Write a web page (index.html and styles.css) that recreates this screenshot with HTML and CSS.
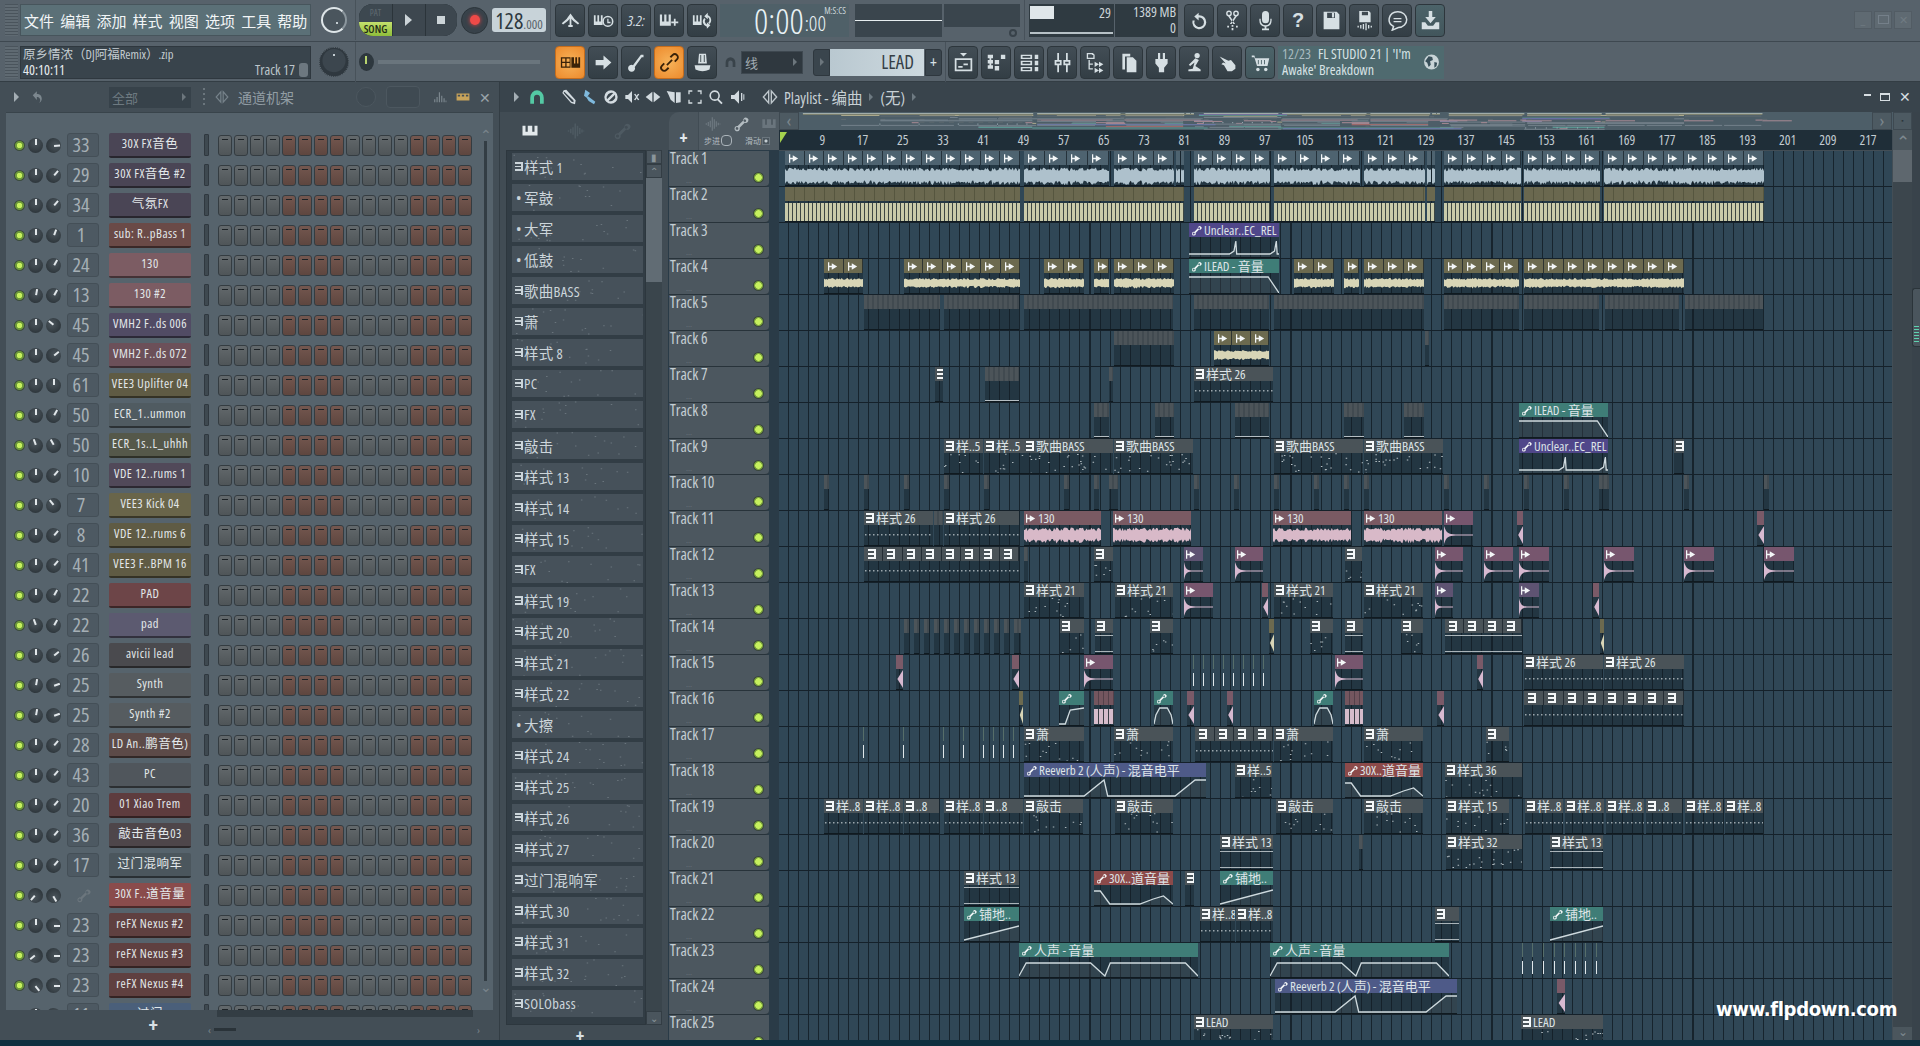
FILE: index.html
```html
<!DOCTYPE html>
<html lang="zh">
<head>
<meta charset="utf-8">
<title>FL Studio 21</title>
<link rel="stylesheet" href="styles.css">
</head>
<body>
<svg class="defs" width="0" height="0" aria-hidden="true">
  <symbol id="i-tap" viewBox="0 0 24 24"><path d="M2 15Q8 11 12 4Q16 11 22 15L20.500 16.500Q15 13 12 9Q9 13 3.500 16.500Z"/><path d="M11 8h2v10h-2zM9.500 17h5v2.500h-5z"/></symbol>
  <symbol id="i-kclock" viewBox="0 0 24 24"><path d="M1 6h2v7h2V6h2v7h2V6h2v11H1z"/><circle cx="17" cy="13" r="5.500" fill="none" stroke="currentColor" stroke-width="1.800"/><path d="M16.300 10h1.400v3.500H20V15h-3.700z"/></symbol>
  <symbol id="i-kplus" viewBox="0 0 24 24"><path d="M1 5h2.500v8H6V5h2.500v8H11V5h2.500v13H1z"/><path d="M17 10h2v3h3v2h-3v3h-2v-3h-3v-2h3z"/></symbol>
  <symbol id="i-keys3" viewBox="0 0 24 24"><path d="M2 5h4v8h3V5h6v8h3V5h4v13H2z"/></symbol>
  <symbol id="i-kloop" viewBox="0 0 24 24"><path d="M1 6h2v7h2V6h2v7h2V6h2v11H1z"/><path d="M18 6a6 6 0 0 1 2 10l-1.500-1.500a4 4 0 0 0-.5-6.500v2.500L14 7l4-4zM17 19a6 6 0 0 1-3-10l1.500 1.500a4 4 0 0 0 1.500 6v-2.500l4 3.500-4 4z"/></symbol>
  <symbol id="i-undo" viewBox="0 0 24 24"><path d="M11 3v3a8 8 0 1 1-7 6h2.500A5.500 5.500 0 1 0 11 8.500V12L6 7.500z"/></symbol>
  <symbol id="i-cut" viewBox="0 0 24 24"><circle cx="8" cy="4" r="2.500" fill="none" stroke="currentColor" stroke-width="1.600"/><circle cx="16" cy="4" r="2.500" fill="none" stroke="currentColor" stroke-width="1.600"/><path d="M8.500 6L15 16h-2L7 7zM15.500 6L9 16h2l6-9z"/><path d="M11 17h2v2h-2zM6 18h2v2H6zM16 18h2v2h-2zM11 20.500h2V23h-2z"/></symbol>
  <symbol id="i-mic" viewBox="0 0 24 24"><rect x="8" y="1" width="8" height="14" rx="4"/><path d="M5 10h1.500v2a5.500 5.500 0 0 0 11 0v-2H19v2a7 7 0 0 1-6 7v2h3v2H8v-2h3v-2a7 7 0 0 1-6-7z"/></symbol>
  <symbol id="i-save" viewBox="0 0 24 24"><path d="M3 2h15l3 3v17H3zM7 3v6h9V3zM12.500 3.500h2.500v5h-2.500z" fill-rule="evenodd"/></symbol>
  <symbol id="i-savew" viewBox="0 0 24 24"><path d="M6 1h11l2 2v11H6zM9 2v4h7V2z" fill-rule="evenodd"/><path d="M4 18h1.500v2H4zM7 17h1.500v4H7zM10 16h1.500v6H10zM13 15h1.500v8H13zM16 17h1.500v4H16zM19 18h1.500v2H19z"/></symbol>
  <symbol id="i-chat" viewBox="0 0 24 24"><path d="M12 2a10 9 0 0 1 1 18l-7 3 1.500-4.200A10 9 0 0 1 12 2z" fill="none" stroke="currentColor" stroke-width="1.700"/><path d="M7.500 9h9v1.500h-9zM7.500 12.500h9V14h-9z"/></symbol>
  <symbol id="i-down" viewBox="0 0 24 24"><path d="M10 1h4v7h4l-6 7-6-7h4z"/><path d="M2 14h4l3 4h6l3-4h4v8H2z"/></symbol>
  <symbol id="i-roll" viewBox="0 0 24 24"><path d="M1 6h11v12H1zM2.500 7.500V11H6V7.500zM7.500 7.500V11H11V7.500zM2.500 12.500V16.500H6V12.500zM7.500 12.500V16.500H11V12.500z" fill-rule="evenodd"/><path d="M13 6h3v7h1.500V6h2v7H21V6h2v12H13z"/></symbol>
  <symbol id="i-arrow" viewBox="0 0 24 24"><path d="M3 9h9V4l9 8-9 8v-5H3z"/></symbol>
  <symbol id="i-note" viewBox="0 0 24 24"><path d="M17 3h3v3h-2L10 17a4 4 0 1 1-2-2z"/></symbol>
  <symbol id="i-link" viewBox="0 0 24 24"><path d="M9 15l6-6" fill="none" stroke="currentColor" stroke-width="2"/><path d="M13 6l2.500-2.500a3.500 3.500 0 0 1 5 5L18 11M11 18l-2.500 2.500a3.500 3.500 0 0 1-5-5L6 13" fill="none" stroke="currentColor" stroke-width="2.200"/></symbol>
  <symbol id="i-fader" viewBox="0 0 24 24"><path d="M8 2h8l1 11H7z"/><path d="M9.500 3.500h1v8h-1zM13.500 3.500h1v8h-1z" fill="#39444b"/><path d="M3 15h18l-1 5q-8 4-16 0z"/></symbol>
  <symbol id="i-pl" viewBox="0 0 24 24"><path d="M8 1h8l-4 4z"/><path d="M2 7h20v15H2zM4 9v11h16V9z" fill-rule="evenodd"/><path d="M6 16h5v2H6zM12 13h5v2h-5z"/></symbol>
  <symbol id="i-seq" viewBox="0 0 24 24"><path d="M2 3h6v4H6v2h2v4H6v2h2v4H2v-4h2v-2H2V9h2V7H2zM10 9h5v5h-5zM17 3h5v5h-5zM10 16h5v5h-5z"/></symbol>
  <symbol id="i-rack" viewBox="0 0 24 24"><path d="M2 3h13v5H2zM4 4.500v2h9v-2zM2 10h13v5H2zM4 11.500v2h9v-2zM2 17h13v5H2zM4 18.500v2h9v-2zM18 3h4v5h-4zM18 10h4v5h-4zM18 17h4v5h-4z" fill-rule="evenodd"/></symbol>
  <symbol id="i-mix" viewBox="0 0 24 24"><path d="M6 1h2v8h3v6H8v8H6v-8H3V9h3zM5 11v2h4v-2zM16 1h2v8h3v6h-3v8h-2v-8h-3V9h3zM15 11v2h4v-2z" fill-rule="evenodd"/></symbol>
  <symbol id="i-brow" viewBox="0 0 24 24"><path d="M2 1h7l2 2v5H2zM3.500 2.500v4H9.500v-3H8.500l-1-1zM4 9h1.500v4H9v1.500H5.500v4H9V20H4z" fill-rule="evenodd"/><path d="M11 11l5 3-5 3zM16 11l5 3-5 3zM11 18l5 3-5 3zM16 18l5 3-5 3z"/></symbol>
  <symbol id="i-docs" viewBox="0 0 24 24"><path d="M5 2h9v3H8v15H5z"/><path d="M10 6h7l4 4v13H10z"/></symbol>
  <symbol id="i-plug" viewBox="0 0 24 24"><path d="M8 1h2.500v7h3V1H16v7h3v5l-4 5v5H9v-5l-4-5V8h3z"/></symbol>
  <symbol id="i-ped" viewBox="0 0 24 24"><circle cx="15" cy="4" r="3"/><path d="M13 7l4 2-4 7 6 4v2H5v-2l5-1 2-7-5 4-1.500-1.500z"/></symbol>
  <symbol id="i-hand" viewBox="0 0 24 24"><path d="M3 5l10 5 3-1 5 6v4l-4 3h-5l-4-7-3-1 2-2 3 1z"/></symbol>
  <symbol id="i-cart" viewBox="0 0 24 24"><path d="M2 4h3l1 3h16l-2 9H8L5 6H2z"/><circle cx="9" cy="20" r="2"/><circle cx="18" cy="20" r="2"/><path d="M9 9h1v5H9zM12.500 9h1v5h-1zM16 9h1v5h-1z" fill="#4a6066"/></symbol>
  <symbol id="i-globe" viewBox="0 0 24 24"><circle cx="12" cy="12" r="10.500"/><path d="M8 4l5 1 1 4-4 2 1 5-3 3-2-6-3-2zM16 12l4 1-1 5-3 2z" fill="#39505a"/></symbol>
  <symbol id="i-magnet" viewBox="0 0 24 24"><path d="M3 13a9 10 0 0 1 18 0v8h-5v-8a4 4 0 0 0-8 0v8H3z"/></symbol>
  <symbol id="i-speak" viewBox="0 0 24 24"><path d="M10 3v18L2 12zM14 3l8 9-8 9z" fill="none" stroke="currentColor" stroke-width="2"/></symbol>
  <symbol id="i-back" viewBox="0 0 24 24"><path d="M10 2v5h2a8 8 0 0 1 2 15 6 6 0 0 0-2-10h-2v5L3 9z"/></symbol>
  <symbol id="i-bars" viewBox="0 0 24 24"><path d="M2 16h2v5H2zM6 12h2v9H6zM10 4h2v17h-2zM14 10h2v11h-2zM18 14h2v7h-2zM21.500 18h1.500v3h-1.500z"/></symbol>
  <symbol id="i-keys" viewBox="0 0 24 24"><path d="M1 6h22v12H1zM3 8v3h4V8zM10 8v3h4V8zM17 8v3h4V8z" fill-rule="evenodd"/></symbol>
  <symbol id="i-pencil" viewBox="0 0 24 24"><path d="M4 2l4-1 14 16-1 6-6-2L2 6zM5 4l-1 1.500 12 13.500 3 1-.5-3z" fill-rule="evenodd"/></symbol>
  <symbol id="i-brush" viewBox="0 0 24 24"><path d="M5 1l7 5-5 7-4-3zM9 11l11 8-2 4-8-5-3-5z"/></symbol>
  <symbol id="i-del" viewBox="0 0 24 24"><path d="M12 2a10 10 0 1 1 0 20 10 10 0 0 1 0-20zM6 15.500L15.500 6A7.500 7.500 0 0 0 6 15.500zM18 8.500L8.500 18A7.500 7.500 0 0 0 18 8.500z" fill-rule="evenodd"/></symbol>
  <symbol id="i-mute" viewBox="0 0 24 24"><path d="M2 9h4l6-6v18l-6-6H2z"/><path d="M15 8l2-1 2 3 2-3 2 1-3 4 3 4-2 1-2-3-2 3-2-1 3-4z"/></symbol>
  <symbol id="i-slip" viewBox="0 0 24 24"><path d="M11 4v16L1 12zM13 4l10 8-10 8z"/></symbol>
  <symbol id="i-sel" viewBox="0 0 24 24"><path d="M1 3l12 2v16l-6-5-3-7zM15 5h7v15l-7 1z"/></symbol>
  <symbol id="i-frame" viewBox="0 0 24 24"><path d="M2 2h6v2H4v4H2zM16 2h6v6h-2V4h-4zM2 16h2v4h4v2H2zM20 16h2v6h-6v-2h4z"/></symbol>
  <symbol id="i-zoom" viewBox="0 0 24 24"><path d="M10 2a8 8 0 0 1 6 13l6 6-2 2-6-6A8 8 0 1 1 10 2zM10 4.500a5.500 5.500 0 1 0 0 11 5.500 5.500 0 0 0 0-11z" fill-rule="evenodd"/></symbol>
  <symbol id="i-play" viewBox="0 0 24 24"><path d="M3 9h5l7-7v20l-7-7H3zM18 6h2v12h-2zM21.500 8h1.500v8h-1.500z"/></symbol>
  <symbol id="i-wave" viewBox="0 0 24 24"><path d="M1 11h2v2H1zM4 9h2v6H4zM7 7h2v10H7zM10 2h2v20h-2zM13 5h2v14h-2zM16 8h2v8h-2zM19 10h2v4h-2zM22 11h1v2h-1z"/></symbol>
  <symbol id="i-auto" viewBox="0 0 24 24"><path d="M16 4a4 4 0 1 1 1.500 6L10 17.500A4 4 0 1 1 7 15l8-8a4 4 0 0 1 1-3zM19 5.500a2 2 0 1 0 0 3 2 2 0 0 0 0-3zM7 17a2 2 0 1 0 1 2 2 2 0 0 0-1-2z" fill-rule="evenodd"/></symbol>
  <symbol id="i-aud" viewBox="0 0 12 10"><path d="M0 0h1.500v10H0zM1.500 4.200h3v1.600h-3zM4.500 1l6.500 4-6.500 4z"/></symbol>
</svg>

<div class="app">
  <header class="toolbar">
    <div class="trow trow-a">
      <div class="grip"></div>
      <nav class="menu">
        <span>文件</span><span>编辑</span><span>添加</span><span>样式</span><span>视图</span><span>选项</span><span>工具</span><span>帮助</span>
      </nav>
      <div class="knob-slot"><div class="mainknob"></div></div>
      <div class="transport">
        <div class="patsong"><span class="pat">PAT</span><span class="song">SONG</span></div>
        <div class="tbtn"><span class="tri"></span></div>
        <div class="tbtn"><span class="sq"></span></div>
      </div>
      <div class="rec"><span></span></div>
      <div class="bpm"><b>128</b><small>.000</small></div>
      <div class="sep"></div>
      <div class="btns">
        <div class="btn"><svg><use href="#i-tap"/></svg></div>
        <div class="btn"><svg><use href="#i-kclock"/></svg></div>
        <div class="btn btn-text"><i>3.2:</i></div>
        <div class="btn"><svg><use href="#i-kplus"/></svg></div>
        <div class="btn"><svg><use href="#i-kloop"/></svg></div>
      </div>
      <div class="time"><span class="big">0:00</span><span class="mid">:00</span><span class="lab">M:S:CS</span></div>
      <div class="scope"><div></div></div>
      <div class="scope2"><span class="dotknob"></span></div>
      <div class="sep"></div>
      <div class="cpu"><div class="cpu-bar"></div><span>29</span><div class="cpu-line"></div></div>
      <div class="mem"><span>1389 MB</span><span>0</span></div>
      <div class="btns btns-r">
        <div class="btn"><svg><use href="#i-undo"/></svg></div>
        <div class="btn"><svg><use href="#i-cut"/></svg></div>
        <div class="btn"><svg><use href="#i-mic"/></svg></div>
        <div class="btn btn-q">?</div>
        <div class="btn"><svg><use href="#i-save"/></svg></div>
        <div class="btn"><svg><use href="#i-savew"/></svg></div>
        <div class="btn"><svg><use href="#i-chat"/></svg></div>
        <div class="btn btn-teal"><svg><use href="#i-down"/></svg></div>
      </div>
      <div class="winbtns"><span class="wmin">_</span><span class="wmax"></span><span>✕</span></div>
    </div>
    <div class="trow trow-b">
      <div class="grip"></div>
      <div class="hint">
        <div class="hint-a">原乡情浓（DJ阿福Remix）.zip</div>
        <div class="hint-b"><span>40:10:11</span><span class="hint-r">Track 17<i class="hfader"></i></span></div>
      </div>
      <div class="knob-slot"><div class="ticknob"></div></div>
      <div class="slider"><span class="slider-k"></span><span class="slider-t"></span></div>
      <div class="btns btns-2">
        <div class="btn btn-org"><svg><use href="#i-roll"/></svg></div>
        <div class="btn"><svg><use href="#i-arrow"/></svg></div>
        <div class="btn"><svg><use href="#i-note"/></svg></div>
        <div class="btn btn-org"><svg><use href="#i-link"/></svg></div>
        <div class="btn"><svg><use href="#i-fader"/></svg></div>
      </div>
      <svg class="snap"><use href="#i-magnet"/></svg>
      <div class="snapsel"><span>线</span><em></em></div>
      <div class="small-btn"><em></em></div>
      <div class="lead"><span>LEAD</span></div>
      <div class="small-btn plus">+</div>
      <div class="sep sep-c"></div>
      <div class="btns btns-3">
        <div class="btn"><svg><use href="#i-pl"/></svg></div>
        <div class="btn"><svg><use href="#i-seq"/></svg></div>
        <div class="btn"><svg><use href="#i-rack"/></svg></div>
        <div class="btn"><svg><use href="#i-mix"/></svg></div>
        <div class="btn"><svg><use href="#i-brow"/></svg></div>
        <div class="btn"><svg><use href="#i-docs"/></svg></div>
        <div class="btn"><svg><use href="#i-plug"/></svg></div>
        <div class="btn"><svg><use href="#i-ped"/></svg></div>
        <div class="btn"><svg><use href="#i-hand"/></svg></div>
        <div class="btn btn-teal"><svg><use href="#i-cart"/></svg></div>
      </div>
      <div class="news">
        <div><span class="news-d">12/23</span>FL STUDIO 21 | 'I'm<br>Awake' Breakdown</div>
        <svg><use href="#i-globe"/></svg>
      </div>
    </div>
  </header>

  <main class="work">
    <section class="rack">
      <div class="rack-title">
        <em class="tri-s"></em>
        <svg class="ic14 dim"><use href="#i-back"/></svg>
        <div class="rack-sel"><span>全部</span><em></em></div>
        <span class="vdots"></span>
        <svg class="ic14 dim2"><use href="#i-speak"/></svg>
        <span class="rack-name">通道机架</span>
        <span class="ghost-knob"></span>
        <span class="ghost-box"></span>
        <svg class="ic14 dim3"><use href="#i-bars"/></svg>
        <svg class="ic14 gold"><use href="#i-keys"/></svg>
        <span class="closex">✕</span>
      </div>
      <div class="rack-body">
        <div class="rack-rows" id="rack"></div>
        <div class="rack-scroll"><span class="chev">⌃</span><span class="rack-thumb"></span><span class="chev">⌄</span></div>
      </div>
      <div class="rack-foot">
        <span class="rack-plus">+</span>
        <div class="rack-hs"><span class="hs-dark"></span><div class="hs-line"><span>‹</span><i></i><span>›</span></div></div>
      </div>
    </section>

    <section class="playlist">
      <div class="pl-title">
        <em class="tri-s"></em>
        <svg class="ic18 teal"><use href="#i-magnet"/></svg>
        <div class="pl-tools">
          <svg><use href="#i-pencil"/></svg>
          <svg class="blue"><use href="#i-brush"/></svg>
          <svg><use href="#i-del"/></svg>
          <svg><use href="#i-mute"/></svg>
          <svg><use href="#i-slip"/></svg>
          <svg><use href="#i-sel"/></svg>
          <svg><use href="#i-frame"/></svg>
          <svg><use href="#i-zoom"/></svg>
          <svg><use href="#i-play"/></svg>
        </div>
        <svg class="ic16 spk"><use href="#i-speak"/></svg>
        <span class="pl-name">Playlist - 编曲</span><em class="tri-s t2"></em><span class="pl-name">(无)</span><em class="tri-s t2"></em>
        <div class="pl-win"><span class="wm"></span><span class="wx"></span><span class="wc">✕</span></div>
      </div>
      <div class="pl-body">
        <aside class="picker">
          <div class="picker-tabs">
            <svg class="on"><use href="#i-keys3"/></svg>
            <svg><use href="#i-wave"/></svg>
            <svg><use href="#i-auto"/></svg>
          </div>
          <div class="picker-mid">
            <div class="picker-list" id="picker"></div>
            <div class="picker-scroll"><span class="ps-b">▮</span><span class="ps-b">⌃</span><span class="ps-thumb"></span><span class="ps-track"></span><span class="ps-b">⌄</span></div>
          </div>
          <div class="picker-plus">+</div>
        </aside>
        <div class="arr">
          <div class="arr-head">
            <div class="corner">
              <div class="corner-tab">+</div>
              <div class="corner-panel">
                <div class="corner-ic"><svg><use href="#i-wave"/></svg><svg><use href="#i-auto"/></svg><svg><use href="#i-keys3"/></svg></div>
                <div class="corner-lb"><span>步进</span><i class="oval"></i><span>滑动</span><i class="dotb"></i></div>
              </div>
            </div>
            <div class="timeline">
              <div class="ov-row">
                <div class="ov-btn">‹</div>
                <svg class="overview" id="overview" viewBox="0 0 1073 18" preserveAspectRatio="none"></svg>
                <div class="ov-btn">›</div>
                <div class="ov-btn ov-dot">▪</div>
              </div>
              <div class="ruler-row">
                <div class="ruler" id="ruler"><i class="marker"></i></div>
                <div class="ruler-up">⌃</div>
              </div>
            </div>
          </div>
          <div class="arr-body">
            <div class="tracks" id="tracks"></div>
            <div class="canvas" id="canvas"></div>
            <div class="vscroll"><span class="v-thumb"></span><span class="v-track"></span><span class="v-down">⌄</span></div>
          </div>
          <div class="watermark">www.flpdown.com</div>
        </div>
        <div class="edge"><div class="edge-tab"><i></i></div></div>
      </div>
    </section>
  </main>
  <footer class="foot"></footer>
</div>
<script src="app.js"></script>
</body>
</html>
```

FILE: styles.css
```css
* { box-sizing: border-box; }
html, body { margin: 0; padding: 0; height: 100%; overflow: hidden; background: #0f3040; }
body { font-family: "Open Sans", "Noto Sans CJK SC", sans-serif; font-stretch: 75%; color: #d5dde1; }
.defs { position: absolute; }
em, i { font-style: normal; }
svg { fill: currentColor; display: block; }

.app { width: 1920px; height: 1046px; display: flex; flex-direction: column; overflow: hidden; }

/* ---------- toolbar ---------- */
.toolbar { height: 82px; background: #57626b; flex: none; }
.trow { display: flex; align-items: center; }
.trow-a { height: 42px; border-bottom: 1px solid #3e4850; padding-bottom: 1px; }
.trow-b { height: 40px; border-bottom: 1px solid #333d44; padding-top: 1px; }
.grip { width: 13px; height: 32px; margin: 0 2px 0 5px; flex: none;
  background: repeating-linear-gradient(180deg, #4a545c 0 1px, #5f6a72 1px 3px); }
.menu { width: 291px; height: 32px; background: #5b7077; border: 1px solid #47555c; display: flex; align-items: center; gap: 6.200px; padding-left: 3px; flex: none; }
.menu span { font-family: "Noto Sans CJK SC", sans-serif; font-size: 15px; line-height: 1; color: #f2f6f7; width: 30px; }
.knob-slot { width: 45px; height: 40px; display: flex; align-items: center; justify-content: center; flex: none; border-right: 1px solid #48525a; padding-left: 2px; }
.mainknob { width: 26px; height: 26px; border-radius: 50%; background: #4a555d; border: 2px solid #dfe6e9; border-right-color: #8b969d; position: relative; }
.mainknob::after { content: ""; position: absolute; left: 13px; top: 13px; width: 2px; height: 2px; background: #c4cdd2; }
.ticknob { width: 30px; height: 30px; border-radius: 50%; border: 1px dotted #5f6a72; background: radial-gradient(circle at 50% 45%, #3c464e 0 11px, #2f383f 12px); position: relative; }
.ticknob::after { content: ""; position: absolute; left: 13px; top: 6px; width: 2px; height: 2px; background: #c4cdd2; }
.transport { margin-left: 3px; width: 98px; height: 32px; background: #353f46; border-radius: 14px; display: flex; overflow: hidden; flex: none; box-shadow: inset 0 0 0 1px #2b343a; }
.patsong { width: 33px; display: flex; flex-direction: column; }
.pat { height: 18px; font-size: 9px; color: #5f6a71; text-align: center; line-height: 18px; background: #3d4850; }
.song { height: 14px; font-size: 11px; line-height: 14px; color: #1f2a16; text-align: center; background: linear-gradient(#c4e06d, #8fbe3a); font-weight: 600; }
.tbtn { flex: 1; display: flex; align-items: center; justify-content: center; border-left: 1px solid #2b343a; background: #3d474f; }
.tri { border-left: 7px solid #ccd4d8; border-top: 6px solid transparent; border-bottom: 6px solid transparent; }
.sq { width: 8px; height: 8px; background: #ccd4d8; }
.rec { width: 27px; height: 27px; margin-left: 4px; border-radius: 50%; background: #38424a; border: 1px solid #2b343a; display: flex; align-items: center; justify-content: center; flex: none; }
.rec span { width: 10px; height: 10px; border-radius: 50%; background: #ee4a48; box-shadow: 0 0 4px #e44; }
.bpm { margin-left: 4px; width: 54px; height: 24px; background: #c8d3d9; border-radius: 3px; display: flex; align-items: baseline; justify-content: center; color: #2d383f; line-height: 24px; flex: none; }
.bpm b { font-weight: 400; font-size: 22px; }
.bpm small { font-size: 13px; color: #59646b; }
.sep { width: 1px; height: 40px; background: #47515a; margin: 0 4px 0 4px; flex: none; }
.btns { display: flex; gap: 3px; flex: none; }
.btn { width: 30px; height: 33px; border-radius: 4px; background: linear-gradient(#424d55, #333e45); border: 1px solid #2d363c; display: flex; align-items: center; justify-content: center; color: #d6dfe3; flex: none; }
.btn svg { width: 21px; height: 21px; }
.btn-text i { font-size: 15px; line-height: 18px; font-style: italic; color: #d6dfe3; }
.btn-q { font-family: "Liberation Sans", sans-serif; font-weight: bold; font-size: 20px; }
.btn-teal { background: linear-gradient(#4c6369, #42565c); }
.btn-org { background: radial-gradient(circle, #f6b35a, #ed8a2c); border-color: #c56d1d; color: #3a2208; }
.time { margin-left: 3px; width: 129px; height: 33px; background: #4f6068; display: flex; align-items: flex-end; padding-left: 34px; position: relative; flex: none; color: #e9f2f5; overflow: hidden; }
.big { font-weight: 300; font-size: 35px; line-height: 33px; }
.mid { font-weight: 300; font-size: 21px; line-height: 27px; margin-left: 1px; }
.lab { position: absolute; right: 3px; top: 2px; font-size: 9px; line-height: 10px; color: #cdd7db; }
.scope { margin-left: 6px; width: 87px; height: 33px; background: #3a454d; display: flex; align-items: center; flex: none; }
.scope div { width: 100%; height: 1px; background: #e8eef0; }
.scope2 { margin: -10px 0 0 2px; width: 76px; height: 23px; background: #3a454d; position: relative; flex: none; }
.dotknob { position: absolute; right: 3px; top: 25px; width: 8px; height: 8px; border-radius: 50%; border: 2px solid #38424a; }
.cpu { width: 85px; height: 33px; background: #2f3a41; position: relative; flex: none; }
.cpu-bar { position: absolute; left: 1px; top: 2px; width: 24px; height: 13px; background: #dfe6e9; }
.cpu span { position: absolute; right: 3px; top: 1px; font-size: 14px; color: #cdd5d9; line-height: 16px; }
.cpu-line { position: absolute; left: 1px; right: 1px; bottom: 3px; height: 2px; background: #b7c1c6; }
.mem { margin-left: 1px; width: 63px; height: 33px; background: #2f3a41; text-align: right; padding-right: 2px; font-size: 14px; line-height: 16px; color: #cdd5d9; display: flex; flex-direction: column; flex: none; }
.btns-r { margin-left: 6px; }
.winbtns { margin-left: auto; margin-right: 8px; display: flex; gap: 2px; }
.winbtns span { width: 18px; height: 18px; background: #5f6a72; border: 1px solid #525c64; color: #707b82; font-size: 11px; text-align: center; line-height: 16px; }
.wmax::after { content: ""; display: inline-block; width: 9px; height: 7px; border: 1px solid #75808a; }

.hint { width: 291px; height: 33px; background: #39444c; border: 1px solid #2f383f; padding: 0 2px; color: #c4ccd1; flex: none; display: flex; flex-direction: column; }
.hint-a { height: 15px; font-size: 12.500px; line-height: 15px; white-space: nowrap; }
.hint-b { height: 16px; display: flex; justify-content: space-between; color: #e7edf0; font-size: 14px; line-height: 16px; }
.hint-r { color: #bdc6cb; display: flex; align-items: center; gap: 4px; }
.hfader { width: 9px; height: 14px; border-radius: 3px; background: #6d7880; }
.slider { width: 192px; display: flex; align-items: center; margin-left: 3px; flex: none; }
.slider-k { width: 15px; height: 18px; border-radius: 50%; background: radial-gradient(circle, #2e383f 60%, #232b31); position: relative; flex: none; }
.slider-k::after { content: ""; position: absolute; left: 6px; top: 3px; width: 2px; height: 8px; background: #b7d36e; }
.slider-t { width: 162px; height: 4px; background: #6a757d; margin-left: 4px; }
.btns-2 { margin-left: 4px; }
.snap { width: 13px; height: 14px; margin-left: 7px; color: #39434a; flex: none; }
.snapsel { width: 62px; height: 23px; margin-left: 4px; background: #2f383f; border: 1px solid #3e4850; display: flex; align-items: center; justify-content: space-between; padding: 0 5px 0 3px; font-family: "Noto Sans CJK SC", sans-serif; font-size: 13px; color: #a2acb2; flex: none; }
.snapsel em, .small-btn em, .rack-sel em { border-left: 4px solid #6c767d; border-top: 4px solid transparent; border-bottom: 4px solid transparent; }
.small-btn { width: 17px; height: 27px; margin-left: 10px; background: #3a454d; border: 1px solid #2e373e; border-radius: 3px 0 0 3px; display: flex; align-items: center; justify-content: center; color: #d8e0e4; flex: none; }
.small-btn.plus { margin-left: 1px; border-radius: 0 3px 3px 0; font-size: 16px; }
.lead { width: 94px; height: 27px; background: linear-gradient(90deg, #b9c8d0, #cdd9df); display: flex; align-items: center; justify-content: flex-end; padding-right: 10px; color: #353f46; font-size: 19px; flex: none; }
.sep-c { margin: 0 2px 0 3px; }
.news { margin-left: 3px; width: 166px; height: 33px; background: #4f6a6f; display: flex; justify-content: space-between; padding: 0 4px 0 4px; font-size: 14px; line-height: 16px; color: #d7e2e5; flex: none; white-space: nowrap; }
.news-d { color: #a8babf; margin-right: 7px; }
.news svg { width: 17px; height: 20px; margin-top: 6px; color: #c8d4d7; }

/* ---------- workspace ---------- */
.work { height: 958px; display: flex; flex: none; }
.rack { width: 500px; background: #434e56; display: flex; flex-direction: column; flex: none; border-right: 1px solid #333d44; }
.rack-title { height: 30px; display: flex; align-items: center; flex: none; padding-left: 14px; }
.tri-s { width: 0; border-left: 5px solid #a4aeb4; border-top: 5px solid transparent; border-bottom: 5px solid transparent; flex: none; }
.tri-s.t2 { border-left-color: #6e7a82; margin: 0 7px; border-left-width: 4px; border-top-width: 4px; border-bottom-width: 4px; }
.ic14 { width: 14px; height: 14px; flex: none; }
.ic16 { width: 16px; height: 16px; flex: none; }
.ic18 { width: 18px; height: 18px; flex: none; }
.dim { color: #7c878e; margin-left: 12px; }
.dim2 { color: #76828a; margin-left: 10px; }
.dim3 { color: #7c878e; margin-left: 13px; }
.rack-sel { margin-left: 64px; width: 82px; height: 21px; background: #37424a; display: flex; align-items: center; justify-content: space-between; padding: 0 5px 0 3px; font-family: "Noto Sans CJK SC", sans-serif; font-size: 13px; color: #6e7a81; flex: none; }
.vdots { width: 2px; height: 18px; margin-left: 12px; background: repeating-linear-gradient(180deg, #6b767d 0 2px, transparent 2px 5px); flex: none; }
.rack-name { margin-left: 9px; font-family: "Noto Sans CJK SC", sans-serif; font-size: 14px; color: #929da4; width: 66px; flex: none; }
.ghost-knob { margin-left: 52px; width: 20px; height: 20px; border-radius: 50%; border: 1px solid #4c575f; background: #3f4a52; flex: none; }
.ghost-box { margin-left: 10px; width: 34px; height: 22px; border-radius: 4px; border: 1px solid #4c575f; background: #3f4a52; flex: none; }
.gold { color: #c9a45a; margin-left: 9px; }
.closex { margin-left: 9px; color: #9aa4aa; font-size: 14px; }

.rack-body { height: 898px; margin: 0 6px; background: #56636c; display: flex; overflow: hidden; flex: none; border-top: 1px solid #39444b; }
.rack-rows { width: 472px; padding-top: 17px; flex: none; }
.crow { height: 30px; display: flex; align-items: center; }
.led { width: 11px; height: 11px; margin-left: 8px; border-radius: 50%; background: radial-gradient(circle, #c6f05e 0 2.500px, #6e9a3a 3px 4px, #3a4a3c 5px); flex: none; }
.knob { width: 15px; height: 15px; margin-left: 3px; border-radius: 50%; background: radial-gradient(circle at 50% 35%, #4b555c, #262e33); position: relative; flex: none; }
.knob::after { content: ""; position: absolute; left: 6.500px; top: 1px; width: 2px; height: 6px; background: #e2e7ea; }
.num { width: 32px; height: 24px; margin-left: 6px; border: 1px solid #444f57; border-radius: 3px; background: #4d5962; text-align: center; font-size: 20px; line-height: 22px; color: #a5afb5; flex: none; padding-right: 4px; }
.num-auto { border: 0; background: transparent; color: #6c767d; display: flex; justify-content: center; align-items: center; padding: 0; }
.num-auto svg { width: 15px; height: 15px; }
.cbtn { width: 82px; height: 25px; margin-left: 10px; border-radius: 2px; border-bottom: 2px solid rgba(0,0,0,.45); font-size: 12.500px; letter-spacing: .5px; line-height: 22px; display: flex; justify-content: center; color: #e3e8ea; white-space: nowrap; overflow: hidden; flex: none; }
.strip { width: 5px; height: 22px; margin-left: 13px; border-radius: 1px; background: #3e4950; border: 1px solid #2f383f; flex: none; }
.steps { display: flex; gap: 2.500px; margin-left: 9px; flex: none; }
.step { width: 13.500px; height: 21px; border-radius: 3px; background: linear-gradient(#63696c, #4f5558); border: 1px solid #343c41; position: relative; }
.step::after { content: ""; position: absolute; left: 3px; right: 3px; top: 3px; height: 1px; background: #1c2226; }
.step.r { background: linear-gradient(#74574f, #5e463f); }
.rack-scroll { flex: 1; position: relative; display: flex; flex-direction: column; align-items: center; color: #79848b; font-size: 14px; padding-top: 16px; }
.chev { height: 12px; line-height: 12px; }
.rack-thumb { width: 3px; height: 840px; background: #333d44; }
.rack-foot { height: 30px; display: flex; flex: none; }
.rack-plus { width: 204px; text-align: right; padding-right: 46px; font-size: 20px; line-height: 30px; color: #d8e0e4; font-weight: bold; }
.rack-hs { width: 285px; display: flex; flex-direction: column; padding-left: 13px; }
.hs-dark { width: 256px; height: 7px; background: #333d44; }
.hs-line { display: flex; align-items: center; justify-content: space-between; width: 272px; margin: 7px 0 0 -9px; color: #798389; font-size: 11px; line-height: 11px; }
.hs-line i { width: 22px; height: 3px; background: #2a3339; margin: 0 auto 0 3px; }

.playlist { flex: 1; display: flex; flex-direction: column; background: #434e56; min-width: 0; }
.pl-title { height: 30px; background: #39444c; display: flex; align-items: center; padding-left: 14px; flex: none; }
.teal { color: #54c9a4; margin-left: 9px; }
.pl-tools { display: flex; margin-left: 15px; gap: 5px; color: #d3dbe0; }
.pl-tools svg { width: 16px; height: 16px; }
.pl-tools .blue { color: #7fb9dd; }
.spk { color: #bfc8cd; margin-left: 17px; }
.pl-name { margin-left: 6px; color: #c7d0d5; font-size: 15.500px; }
.t2 + .pl-name { margin-left: 0; }
.pl-win { margin-left: auto; margin-right: 9px; display: flex; align-items: center; gap: 9px; }
.wm { width: 7px; height: 2px; background: #d7dee2; margin-bottom: 5px; }
.wx { width: 10px; height: 8px; border: 1px solid #d7dee2; border-top-width: 2px; }
.wc { font-size: 14px; color: #d7dee2; line-height: 14px; }

.pl-body { flex: 1; display: flex; min-height: 0; }
.picker { width: 168px; display: flex; flex-direction: column; flex: none; background: #414c54; }
.picker-tabs { height: 38px; display: flex; align-items: center; padding-left: 21px; gap: 28px; color: #4e5a62; flex: none; }
.picker-tabs svg { width: 18px; height: 18px; }
.picker-tabs .on { color: #e3e9ec; }
.picker-mid { height: 875px; display: flex; margin-left: 6px; flex: none; }
.picker-list { width: 140px; background: #323d45; padding: 2px 2px 0 5px; display: flex; flex-direction: column; gap: 4px; overflow: hidden; border: 1px solid #2d373e; }
.pit { height: 27px; flex: none; background: #46515a; display: flex; align-items: center; padding-left: 3px; gap: 1px; font-size: 14.500px; letter-spacing: .3px; color: #ccd5da; position: relative; overflow: hidden; }
.pit svg { position: absolute; left: 0; top: 0; width: 100%; height: 100%; opacity: .35; }
.pit span { position: relative; }
.pi { display: inline-block; width: 8px; height: 9px; background: repeating-linear-gradient(180deg, currentColor 0 1.500px, transparent 1.500px 3.500px); border-right: 2px solid currentColor; flex: none; }
.bu { width: 8px; text-align: center; flex: none; }
.picker-scroll { width: 16px; display: flex; flex-direction: column; color: #8b959b; font-size: 10px; text-align: center; flex: none; }
.ps-b { height: 14px; line-height: 13px; background: #4a555d; border: 1px solid #333d44; flex: none; }
.ps-thumb { height: 104px; background: #616c74; flex: none; }
.ps-track { flex: 1; background: #3a454c; }
.picker-plus { height: 20px; text-align: center; padding-right: 8px; font-size: 18px; font-weight: bold; color: #d8e0e4; line-height: 20px; }

.arr { width: 1244px; display: flex; flex-direction: column; flex: none; position: relative; }
.arr-head { height: 38px; display: flex; flex: none; }
.corner { width: 111px; display: flex; flex: none; background: #414c54; }
.corner-tab { width: 29px; background: #4b565e; border-radius: 10px 0 0 0; margin-left: 1px; text-align: center; font-size: 17px; line-height: 52px; font-weight: bold; color: #e2e8eb; overflow: hidden; }
.corner-panel { flex: 1; background: #505b63; margin-left: 1px; padding: 4px 0 0 5px; }
.corner-ic { display: flex; gap: 10px; color: #6a757d; }
.corner-ic svg { width: 18px; height: 16px; }
.corner-ic svg:nth-child(2) { color: #b3bcc1; }
.corner-lb { display: flex; align-items: center; font-family: "Noto Sans CJK SC", sans-serif; font-size: 8px; line-height: 10px; color: #b3bcc1; margin-top: 3px; gap: 1px; }
.oval { width: 11px; height: 11px; border: 1px solid #aab3b9; border-radius: 4px; margin-right: 12px; }
.dotb { width: 8px; height: 8px; border: 1px solid #6a757d; background: radial-gradient(#c4cdd2 0 1px, #4a555d 2px); }
.timeline { flex: 1; display: flex; flex-direction: column; min-width: 0; }
.ov-row { height: 18px; display: flex; background: #4d5e68; flex: none; }
.ov-btn { width: 20px; background: #4d5a62; border: 1px solid #3e4951; text-align: center; line-height: 14px; font-size: 18px; color: #7b868d; flex: none; }
.ov-dot { margin-left: 1px; font-size: 6px; line-height: 16px; color: #2c363c; width: 19px; }
.overview { width: 1073px; height: 18px; flex: none; }
.ruler-row { height: 20px; display: flex; flex: none; }
.ruler { width: 1113px; flex: none; background: #1f2e38; display: flex; overflow: hidden; position: relative; }
.rl { flex: none; width: 40.220px; text-align: center; font-size: 13.500px; line-height: 20px; color: #c3ccd2; }
.rl:first-of-type { margin-left: -17px; }
.marker { position: absolute; left: 1px; top: 2px; width: 0; border-top: 11px solid #a4d24e; border-right: 7px solid transparent; }
.ruler-up { width: 20px; margin-left: 1px; background: #4b565d; text-align: center; color: #7e8990; font-size: 17px; line-height: 24px; }
.arr-body { flex: 1; display: flex; min-height: 0; overflow: hidden; }
.tracks { width: 111px; flex: none; background: #2a3b47; overflow: hidden; padding-top: 1px; }
.trk { height: 36px; width: 100px; margin-left: 1px; background: #4c575f; border-bottom: 1px solid #28333a; border-radius: 0 0 4px 0; position: relative; font-size: 15.500px; line-height: 15px; color: #c5ced3; padding-left: 1px; }
.trk span { position: absolute; left: 17px; bottom: 2px; color: #66717a; font-size: 9px; line-height: 9px; }
.trk i { position: absolute; right: 5px; top: 21px; width: 11px; height: 11px; border-radius: 50%; background: radial-gradient(circle, #c6f05e 0 3px, #7ea63e 3.500px 4px, #39463b 5px); }
.canvas { width: 1113px; position: relative; flex: none; overflow: hidden; margin-top: 1px;
  background:
    repeating-linear-gradient(180deg, transparent 0 35px, #15212a 35px 36px),
    repeating-linear-gradient(90deg, #304756 0 9px, #17242d 9px 10.050px); }
.vscroll { width: 20px; margin-left: 1px; background: #3c464d; display: flex; flex-direction: column; flex: none; }
.v-thumb { height: 32px; background: #5e676e; flex: none; }
.v-track { flex: 1; }
.v-down { height: 13px; background: #4b565d; text-align: center; font-size: 12px; line-height: 10px; color: #7e8990; flex: none; }
.edge { flex: 1; position: relative; background: #39434b; }
.edge-tab { position: absolute; right: 0; top: 176px; width: 8px; height: 59px; background: #4a555d; border: 1px solid #2b343a; border-right: 0; border-radius: 3px 0 0 3px; display: flex; align-items: flex-end; }
.edge-tab i { width: 5px; height: 16px; margin: 0 0 4px 1px; background: repeating-linear-gradient(180deg, #5ed3b0 0 1px, transparent 1px 3px); }
.foot { height: 6px; background: #0f3040; flex: none; }

.watermark { position: absolute; left: 1048px; top: 885px; color: #fff; font-family: "DejaVu Sans", sans-serif; font-stretch: 75%; font-weight: bold; font-size: 20px; letter-spacing: -.3px; line-height: 24px; white-space: nowrap; }

/* ---------- clips ---------- */
.clip { position: absolute; height: 35px; display: flex; flex-direction: column; overflow: hidden; background: rgba(20,30,37,.42); border-bottom: 1px solid #101a20; }
.ch { height: 14px; flex: none; display: flex; align-items: center; white-space: nowrap; font-size: 13px; line-height: 14px; color: #dde4e7; padding-left: 2px; background: #4a5358; }
.ch .pi { color: #f5f8f9; width: 8px; height: 10px; margin-right: 2px; background: repeating-linear-gradient(180deg, currentColor 0 2px, transparent 2px 4px); }
.ch svg { color: #f3f6f7; flex: none; }
.ch svg.au { width: 10px; height: 9px; margin-right: 2px; }
.ch svg.at { width: 11px; height: 11px; margin-right: 2px; }
.cell { flex: 1; min-width: 0; height: 100%; display: flex; align-items: center; padding-left: 4px; border-right: 1px solid rgba(20,30,37,.7); }
.ch.cells { padding-left: 0; }
.cb { flex: 1; min-height: 0; position: relative; }
.cb svg { position: absolute; left: 0; top: 0; width: 100%; height: 100%; }
.k-gr .ch { background: #4e6370; }
.k-ol .ch { background: #6c6a4f; }
.k-ol2 .ch { background: repeating-linear-gradient(90deg, #6a684f 0 9px, #56563f 9px 10px); }
.k-ol2 .cb { background: repeating-linear-gradient(90deg, #c9caa9 0 3px, #3d4643 3px 4px); margin-top: 2px; }
.k-gr .cb { margin-top: 2px; }
.k-pk .ch { background: #7a5a63; }
.k-kick .ch { background: #77566e; }
.k-kick2 .ch { background: #5e5372; }
.k-ps .ch { background: #7a5a68; }
.k-os .ch { background: #6c6a4f; }
.k-pb .ch { background: repeating-linear-gradient(90deg, #74565f 0 4px, #54414a 4px 5px); }
.k-pb .cb { background: repeating-linear-gradient(90deg, #d6bccb 0 4px, #3b3f46 4px 5px); margin: 4px 0 1px; }
.k-dk .ch { background: repeating-linear-gradient(90deg, #4c5459 0 3px, #414a50 3px 5px); }
.k-dk2 .ch { background: repeating-linear-gradient(90deg, #4c5459 0 3px, #414a50 3px 5px); }
.k-dk2 .cb { background: linear-gradient(transparent calc(100% - 1px), #b5bec3 calc(100% - 1px)); }
.k-tl .ch { background: #3f7d77; }
.k-pu .ch { background: #50478a; }
.k-bl .ch { background: #4e5a88; }
.k-rd .ch { background: #8c4a4a; }
.k-ln { background: transparent; border: 0; }
.k-ln .ch { height: 14px; background: transparent; padding: 0; justify-content: center; }
.k-ln .ch::after { content: ""; width: 1px; height: 100%; background: #566e6a; }
.k-ln .cb { background: linear-gradient(#dfe7ea, #dfe7ea) center 4px / 1px 13px no-repeat; }
.ln-line { position: absolute; left: 0; right: 0; height: 1px; background: #aab4b9; }
```

FILE: app.js
```js
(function () {
  function rng(seed) {
    var s = seed >>> 0;
    return function () {
      s = (s + 0x6D2B79F5) >>> 0;
      var t = Math.imul(s ^ (s >>> 15), 1 | s);
      t = (t + Math.imul(t ^ (t >>> 7), 61 | t)) ^ t;
      return ((t ^ (t >>> 14)) >>> 0) / 4294967296;
    };
  }

  /* ---------- channel rack ---------- */
  var channels = [
    ['33', '30X FX音色', '#4a4555', 0, 85], ['29', '30X FX音色 #2', '#4a4555', 0, 40], ['34', '气氛FX', '#4a4555', 0, 40],
    ['1', 'sub: R..pBass 1', '#6a4a47', 0, 20], ['24', '130', '#7c5c63', 0, 30], ['13', '130 #2', '#7c5c63', 10, 30],
    ['45', 'VMH2 F..ds 006', '#514b64', 0, -50], ['45', 'VMH2 F..ds 072', '#6c5059', 0, 50], ['61', 'VEE3 Uplifter 04', '#5f5b44', 0, 0],
    ['50', 'ECR_1..ummon', '#505b61', 0, 30], ['50', 'ECR_1s..L_uhhh', '#55584a', -20, -30], ['10', 'VDE 12..rums 1', '#514959', 0, 40],
    ['7', 'VEE3 Kick 04', '#69654a', 0, -40], ['8', 'VDE 12..rums 6', '#5f5b44', 0, 40], ['41', 'VEE3 F..BPM 16', '#5f5b44', 0, 40],
    ['22', 'PAD', '#6d4548', 0, 30], ['22', 'pad', '#5c5a70', -20, 30], ['26', 'avicii lead', '#4a4a4e', 0, 50],
    ['25', 'Synth', '#565c60', 10, 70], ['25', 'Synth #2', '#565c60', 10, 70], ['28', 'LD An..鹏音色)', '#5c4a48', 0, 40],
    ['43', 'PC', '#50565c', 0, 40], ['20', '01 Xiao Trem', '#5e3c3e', 0, 40], ['36', '敲击音色03', '#4e464a', 0, 40],
    ['17', '过门混响军', '#4b565d', 0, 40], ['', '30X F..道音量', '#8a4c4c', -140, 150], ['23', 'reFX Nexus #2', '#5f4040', 0, 90],
    ['23', 'reFX Nexus #3', '#5f4040', -130, 90], ['23', 'reFX Nexus #4', '#5f4040', 140, 90], ['11', '过门', '#4a5f7a', 0, 40]
  ];
  var rackHtml = channels.map(function (c) {
    var steps = '';
    for (var i = 0; i < 16; i++) steps += '<span class="step' + (Math.floor(i / 4) % 2 ? ' r' : '') + '"></span>';
    var num = c[0]
      ? '<div class="num">' + c[0] + '</div>'
      : '<div class="num num-auto"><svg><use href="#i-auto"/></svg></div>';
    return '<div class="crow"><span class="led"></span>' +
      '<span class="knob" style="transform:rotate(' + c[3] + 'deg)"></span>' +
      '<span class="knob" style="transform:rotate(' + c[4] + 'deg)"></span>' + num +
      '<div class="cbtn" style="background:' + c[2] + '">' + c[1] + '</div>' +
      '<span class="strip"></span><div class="steps">' + steps + '</div></div>';
  }).join('');
  document.getElementById('rack').innerHTML = rackHtml;

  /* ---------- speck generator ---------- */
  function specks(w, h, seed, count, color) {
    var r = rng(seed), d = '';
    for (var i = 0; i < count; i++) {
      d += 'M' + (r() * w).toFixed(1) + ' ' + (r() * h).toFixed(1) + 'h1.5v1h-1.5z';
    }
    return '<svg viewBox="0 0 ' + w + ' ' + h + '" preserveAspectRatio="none"><path d="' + d + '" fill="' + color + '"/></svg>';
  }

  /* ---------- pattern picker ---------- */
  var patterns = ['样式 1', '•军鼓', '•大军', '•低鼓', '歌曲BASS', '萧', '样式 8', 'PC', 'FX', '敲击', '样式 13', '样式 14', '样式 15', 'FX', '样式 19', '样式 20', '样式 21', '样式 22', '•大擦', '样式 24', '样式 25', '样式 26', '样式 27', '过门混响军', '样式 30', '样式 31', '样式 32', 'SOLObass'];
  document.getElementById('picker').innerHTML = patterns.map(function (p, i) {
    var icon = p.charAt(0) === '•' ? '<span class="bu">•</span>' : '<span class="pi"></span>';
    return '<div class="pit">' + specks(130, 27, i + 7, 14, '#aab6bc') + icon + '<span>' + p.replace('•', '') + '</span></div>';
  }).join('');

  /* ---------- tracks ---------- */
  var tr = '';
  for (var t = 1; t <= 25; t++) tr += '<div class="trk">Track ' + t + '<span>...</span><i></i></div>';
  document.getElementById('tracks').innerHTML = tr;

  /* ---------- ruler ---------- */
  var ru = '';
  for (var b = 1; b <= 217; b += 8) ru += '<span class="rl">' + (b === 1 ? '' : b) + '</span>';
  document.getElementById('ruler').insertAdjacentHTML('beforeend', ru);

  /* ---------- clips ----------
     [row, x0, x1, kind, label-or-cell-count, body] */
  var C = {
    un: '0,17 45,17 50,14 52,4 53,17 90,17 95,14 97,4 98,17 100,17',
    il: '0,4 88,4 100,20',
    rv: '0,19 33,19 44,3 46,19 83,19 94,3 100,3',
    rd: '0,6 8,6 20,19 58,19 75,14 88,11 100,19',
    up: '0,19 100,5',
    vo: '0,19 4,6 40,6 48,19 51,6 93,6 100,19',
    sc: '0,19 25,19 45,5 100,3',
    ar: '0,19 10,10 30,3 70,3 90,10 100,19'
  };
  var P = 'pat';
  var clips = [
    [0,785,1020,'gr',12],[0,1024,1109,'gr',4],[0,1114,1174,'gr',3],[0,1176,1180,'gr',0],[0,1181,1184,'gr',0],[0,1194,1270,'gr',4],[0,1274,1360,'gr',4],[0,1364,1425,'gr',3],[0,1427,1431,'gr',0],[0,1432,1435,'gr',0],[0,1444,1521,'gr',4],[0,1524,1600,'gr',4],[0,1604,1764,'gr',8],
    [1,785,1020,'ol2',''],[1,1024,1184,'ol2',''],[1,1194,1270,'ol2',''],[1,1274,1425,'ol2',''],[1,1427,1435,'ol2',''],[1,1444,1521,'ol2',''],[1,1524,1600,'ol2',''],[1,1604,1764,'ol2',''],
    [2,1189,1279,'pu','Unclear..EC_REL',C.un],
    [3,824,863,'ol',2],[3,904,1020,'ol',6],[3,1044,1084,'ol',2],[3,1094,1109,'ol',1],[3,1114,1174,'ol',3],[3,1189,1279,'tl','ILEAD - 音量',C.il],[3,1294,1334,'ol',2],[3,1344,1359,'ol',1],[3,1364,1424,'ol',3],[3,1444,1519,'ol',4],[3,1524,1684,'ol',8],
    [4,864,940,'dk',''],[4,944,1019,'dk',''],[4,1024,1173,'dk',''],[4,1194,1269,'dk',''],[4,1274,1424,'dk',''],[4,1444,1519,'dk',''],[4,1524,1599,'dk',''],[4,1605,1679,'dk',''],[4,1685,1763,'dk',''],
    [5,1114,1174,'dk',''],[5,1214,1269,'ol',3],[5,1425,1429,'dk',''],
    [6,935,943,P,'','none'],[6,985,1019,'dk2',''],[6,1109,1113,'dk',''],[6,1194,1273,P,'样式 26','dr'],
    [7,1094,1109,'dk2',''],[7,1155,1174,'dk2',''],[7,1235,1269,'dk2',''],[7,1344,1364,'dk2',''],[7,1404,1424,'dk2',''],[7,1519,1608,'tl','ILEAD - 音量',C.il],
    [8,944,983,P,'样..5','sp'],[8,984,1024,P,'样..5','sp'],[8,1024,1113,P,'歌曲BASS','sp+'],[8,1114,1193,P,'歌曲BASS','sp+'],[8,1274,1363,P,'歌曲BASS','sp+'],[8,1364,1443,P,'歌曲BASS','sp+'],[8,1519,1608,'pu','Unclear..EC_REL',C.un],[8,1674,1684,P,'','none'],
    [9,824,829,'dk',''],[9,864,869,'dk',''],[9,904,909,'dk',''],[9,944,949,'dk',''],[9,984,989,'dk',''],[9,1064,1069,'dk',''],[9,1094,1099,'dk',''],[9,1109,1118,'dk',''],[9,1194,1199,'dk',''],[9,1234,1239,'dk',''],[9,1274,1279,'dk',''],[9,1314,1319,'dk',''],[9,1344,1349,'dk',''],[9,1364,1369,'dk',''],[9,1444,1449,'dk',''],[9,1484,1489,'dk',''],[9,1524,1529,'dk',''],[9,1564,1569,'dk',''],[9,1599,1609,'dk',''],[9,1684,1689,'dk',''],[9,1764,1769,'dk',''],
    [10,864,933,P,'样式 26','dr'],[10,934,943,'dk',''],[10,944,1019,P,'样式 26','dr'],[10,1024,1101,'pk','130'],[10,1113,1191,'pk','130'],[10,1273,1351,'pk','130'],[10,1364,1442,'pk','130'],[10,1444,1473,'kick',''],[10,1517,1523,'ps',''],[10,1757,1764,'ps',''],
    [11,864,1019,P,8,'dr'],[11,1024,1028,'dk',''],[11,1094,1113,P,'','sp'],[11,1184,1203,'kick2',''],[11,1235,1263,'kick',''],[11,1345,1362,P,'','sp'],[11,1435,1463,'kick',''],[11,1484,1513,'kick',''],[11,1519,1549,'kick',''],[11,1604,1634,'kick',''],[11,1684,1714,'kick',''],[11,1764,1794,'kick',''],
    [12,1024,1084,P,'样式 21','sp'],[12,1115,1173,P,'样式 21','sp'],[12,1184,1213,'kick',''],[12,1262,1268,'ps',''],[12,1274,1333,P,'样式 21','sp'],[12,1364,1423,P,'样式 21','sp'],[12,1435,1453,'kick2',''],[12,1519,1539,'kick2',''],[12,1593,1599,'ps',''],
    [13,904,909,'dk',''],[13,914,919,'dk',''],[13,924,929,'dk',''],[13,934,939,'dk',''],[13,944,949,'dk',''],[13,954,959,'dk',''],[13,964,969,'dk',''],[13,974,979,'dk',''],[13,984,989,'dk',''],[13,994,999,'dk',''],[13,1004,1009,'dk',''],[13,1014,1021,'dk',''],
    [13,1060,1084,P,'','sp'],[13,1095,1113,P,'','ln'],[13,1150,1173,P,'','sp'],[13,1269,1274,'os',''],[13,1310,1333,P,'','sp'],[13,1345,1363,P,'','ln'],[13,1401,1423,P,'','sp'],[13,1445,1522,P,4,'ln'],[13,1600,1604,'os',''],
    [14,896,903,'ps',''],[14,1012,1019,'ps',''],[14,1084,1113,'kick',''],[14,1193,1194,'lnk',''],[14,1203,1204,'lnk',''],[14,1213,1214,'lnk',''],[14,1223,1224,'lnk',''],[14,1233,1234,'lnk',''],[14,1243,1244,'lnk',''],[14,1253,1254,'lnk',''],[14,1263,1264,'lnk',''],[14,1335,1363,'kick',''],[14,1477,1483,'ps',''],[14,1524,1603,P,'样式 26','dr'],[14,1604,1684,P,'样式 26','dr'],
    [15,1019,1023,'os',''],[15,1059,1084,'tl','',C.sc],[15,1094,1114,'pb',''],[15,1154,1173,'tl','',C.ar],[15,1187,1194,'ps',''],[15,1227,1233,'ps',''],[15,1314,1333,'tl','',C.ar],[15,1345,1363,'pb',''],[15,1437,1444,'ps',''],[15,1524,1684,P,8,'dr'],
    [16,863,864,'lnk',''],[16,903,904,'lnk',''],[16,943,944,'lnk',''],[16,963,964,'lnk',''],[16,983,984,'lnk',''],[16,993,994,'lnk',''],[16,1003,1004,'lnk',''],[16,1013,1014,'lnk',''],[16,1024,1084,P,'萧','sp'],[16,1114,1173,P,'萧','sp'],[16,1195,1273,P,4,'dr'],[16,1274,1333,P,'萧','sp'],[16,1364,1423,P,'萧','sp'],[16,1486,1509,P,'','sp'],
    [17,1024,1206,'bl','Reeverb 2 (人声) - 混音电平',C.rv],[17,1235,1272,P,'样..5','sp'],[17,1345,1423,'rd','30X..道音量',C.rd],[17,1445,1522,P,'样式 36','sp'],
    [18,824,863,P,'样..8','dr'],[18,864,903,P,'样..8','dr'],[18,904,939,P,'..8','dr'],[18,944,983,P,'样..8','dr'],[18,984,1023,P,'..8','dr'],[18,1024,1083,P,'敲击','sp'],[18,1115,1173,P,'敲击','sp'],[18,1276,1333,P,'敲击','sp'],[18,1364,1423,P,'敲击','sp'],[18,1446,1509,P,'样式 15','sp'],[18,1525,1563,P,'样..8','dr'],[18,1565,1604,P,'样..8','dr'],[18,1606,1644,P,'样..8','dr'],[18,1646,1682,P,'..8','dr'],[18,1685,1723,P,'样..8','dr'],[18,1725,1763,P,'样..8','dr'],
    [19,1220,1273,P,'样式 13','ln'],[19,1359,1363,'dk',''],[19,1446,1522,P,'样式 32','sp+'],[19,1550,1603,P,'样式 13','ln'],
    [20,964,1019,P,'样式 13','ln'],[20,1094,1173,'rd','30X..道音量',C.rd],[20,1185,1194,P,'','none'],[20,1220,1273,'tl','铺地..',C.up],
    [21,964,1019,'tl','铺地..',C.up],[21,1200,1235,P,'样..8','dr'],[21,1236,1273,P,'样..8','dr'],[21,1435,1459,P,'','ln'],[21,1550,1603,'tl','铺地..',C.up],
    [22,1019,1198,'tl','人声 - 音量',C.vo],[22,1270,1449,'tl','人声 - 音量',C.vo],[22,1522,1523,'lnk',''],[22,1532,1533,'lnk',''],[22,1543,1544,'lnk',''],[22,1554,1555,'lnk',''],[22,1564,1565,'lnk',''],[22,1575,1576,'lnk',''],[22,1585,1586,'lnk',''],[22,1596,1597,'lnk',''],
    [23,1275,1457,'bl','Reeverb 2 (人声) - 混音电平',C.rv],[23,1557,1565,'ps',''],
    [24,1194,1273,P,'LEAD','sp+'],[24,1521,1603,P,'LEAD','sp+']
  ];

  function waveSvg(w, seed, color, amp, floor) {
    var r = rng(seed), top = '', bot = '', n = Math.max(2, Math.round(w / 1.2));
    for (var i = 0; i <= n; i++) {
      var x = (i / n * 100).toFixed(1), a = amp * (floor + r() * (1 - floor));
      top += x + ',' + (10 - a).toFixed(1) + ' ';
      bot = x + ',' + (10 + a * (0.85 + r() * 0.3)).toFixed(1) + ' ' + bot;
    }
    return '<svg viewBox="0 0 100 20" preserveAspectRatio="none"><polygon points="' + top + bot + '" fill="' + color + '"/></svg>';
  }
  function kickSvg() {
    return '<svg viewBox="0 0 100 20" preserveAspectRatio="none"><path d="M0 1C8 8 15 9 40 9.500L100 9.500V10.500H40C15 11 8 12 0 19Z" fill="#d7b9d0"/></svg>';
  }
  function triSvg(c) {
    return '<svg viewBox="0 0 100 20" preserveAspectRatio="none"><path d="M100 1V19L20 10Z" fill="' + c + '"/></svg>';
  }
  function curveSvg(pts) {
    var closed = pts + ' 100,20 0,20';
    return '<svg viewBox="0 0 100 20" preserveAspectRatio="none"><polygon points="' + closed + '" fill="rgba(255,255,255,.07)"/>' +
      '<polyline points="' + pts + '" fill="none" stroke="#cfdade" stroke-width="1.300" vector-effect="non-scaling-stroke"/></svg>';
  }
  function patBody(style, w, seed) {
    if (style === 'sp') return specks(w, 20, seed, Math.round(w / 7) + 3, '#aab5ba');
    if (style === 'sp+') return specks(w, 20, seed, Math.round(w / 3.5), '#b7c1c6');
    if (style === 'dr') {
      var d = '';
      for (var x = 1; x < w; x += 4) d += 'M' + x + ' 9h1.500v1.500h-1.500z';
      return '<svg viewBox="0 0 ' + w + ' 20" preserveAspectRatio="none"><path d="' + d + '" fill="#9ba6ac"/></svg>';
    }
    if (style === 'ln') return '<i class="ln-line" style="top:2px"></i><i class="ln-line" style="bottom:1px"></i>';
    return '';
  }

  var overview = { gr: '#a9b9c1', ol2: '#8f8e70', ol: '#aaa88c', pk: '#a98a94', kick: '#a98a94', kick2: '#8f85a3', ps: '#a98a94', os: '#aaa88c', pb: '#a98a94', dk: '#5f6a70', dk2: '#5f6a70', pat: '#73808a', lnk: '#a9b9c1', tl: '#5a9c95', pu: '#736ab0', bl: '#6f7bad', rd: '#b06a6a' };
  var ovRects = '', html = '';
  clips.forEach(function (c, idx) {
    var row = c[0], x0 = c[1], x1 = c[2], k = c[3], lb = c[4], extra = c[5];
    var w = x1 - x0, seed = idx * 13 + 5;
    var pos = 'left:' + (x0 - 779) + 'px;top:' + (row * 36) + 'px;width:' + w + 'px';
    var head = '', body = '';
    var iconHtml = (k === 'pat') ? '<span class="pi"></span>' : '<svg class="au"><use href="#i-aud"/></svg>';
    if (k === 'dk' || k === 'dk2' || k === 'ol2' || k === 'pb' || k === 'lnk' || k === 'ps' || k === 'os') {
      head = '';
    } else if (typeof lb === 'number') {
      var cells = '';
      for (var i = 0; i < lb; i++) cells += '<div class="cell">' + iconHtml + '</div>';
      head = cells;
    } else if (k === 'tl' || k === 'pu' || k === 'bl' || k === 'rd') {
      head = '<svg class="at"><use href="#i-auto"/></svg>' + lb;
    } else {
      head = iconHtml + lb;
    }
    if (k === 'gr') body = waveSvg(w, seed, '#aec1cc', 9.500, 0.55);
    else if (k === 'ol') body = waveSvg(w, seed, '#d8d5b6', 5, 0.6);
    else if (k === 'pk') body = waveSvg(w, seed, '#d8b9c8', 7.500, 0.5);
    else if (k === 'kick' || k === 'kick2') body = kickSvg();
    else if (k === 'ps') body = triSvg('#d7b9d0');
    else if (k === 'os') body = triSvg('#d8d5b6');
    else if (k === 'tl' || k === 'pu' || k === 'bl' || k === 'rd') body = curveSvg(extra);
    else if (k === 'pat') body = patBody(extra, w, seed);
    var cls = k === 'lnk' ? 'ln' : k;
    var cellsCls = typeof lb === 'number' && lb > 0 ? ' cells' : '';
    html += '<div class="clip k-' + cls + '" style="' + pos + '"><div class="ch' + cellsCls + '">' + head + '</div><div class="cb">' + body + '</div></div>';
    ovRects += '<rect x="' + ((x0 - 782) * 0.98 + 1).toFixed(1) + '" y="' + (1 + row * 0.66).toFixed(1) + '" width="' + (w * 0.98).toFixed(1) + '" height="1" fill="' + overview[k] + '"/>';
  });
  document.getElementById('canvas').innerHTML = html;
  document.getElementById('overview').innerHTML = ovRects;
})();
```
